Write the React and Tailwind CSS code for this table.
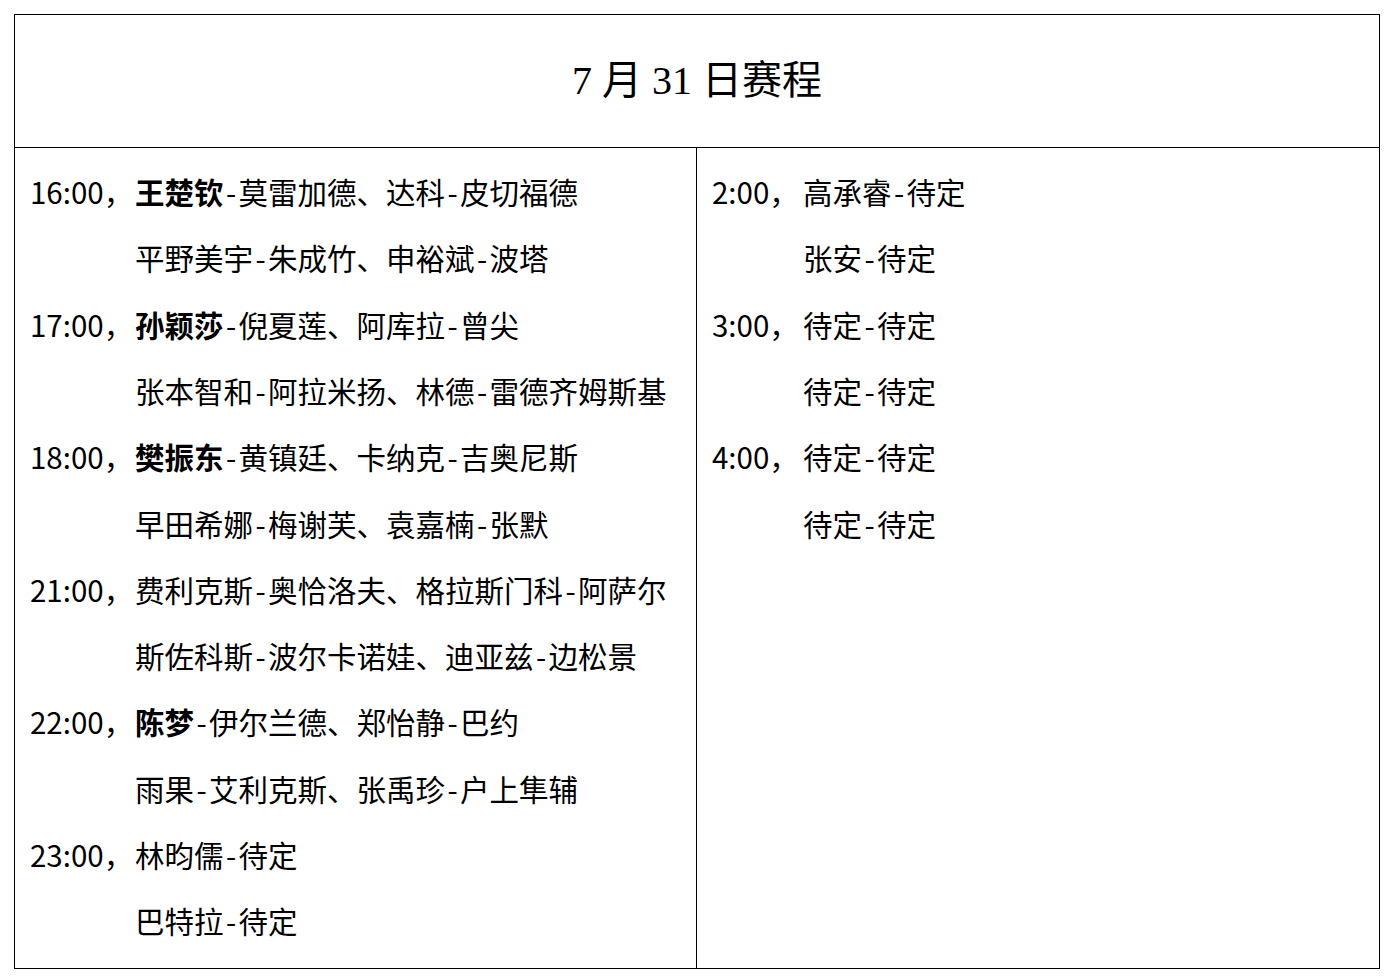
import React from 'react';

const left = [
  { time: '16:00，', bold: '王楚钦', rest: '-莫雷加德、达科-皮切福德' },
  { rest: '平野美宇-朱成竹、申裕斌-波塔' },
  { time: '17:00，', bold: '孙颖莎', rest: '-倪夏莲、阿库拉-曾尖' },
  { rest: '张本智和-阿拉米扬、林德-雷德齐姆斯基' },
  { time: '18:00，', bold: '樊振东', rest: '-黄镇廷、卡纳克-吉奥尼斯' },
  { rest: '早田希娜-梅谢芙、袁嘉楠-张默' },
  { time: '21:00，', rest: '费利克斯-奥恰洛夫、格拉斯门科-阿萨尔' },
  { rest: '斯佐科斯-波尔卡诺娃、迪亚兹-边松景' },
  { time: '22:00，', bold: '陈梦', rest: '-伊尔兰德、郑怡静-巴约' },
  { rest: '雨果-艾利克斯、张禹珍-户上隼辅' },
  { time: '23:00，', rest: '林昀儒-待定' },
  { rest: '巴特拉-待定' },
];

const right = [
  { time: '2:00，', rest: '高承睿-待定' },
  { rest: '张安-待定' },
  { time: '3:00，', rest: '待定-待定' },
  { rest: '待定-待定' },
  { time: '4:00，', rest: '待定-待定' },
  { rest: '待定-待定' },
];

// hyphens are half-width in the original font
const withDashes = (text) =>
  text.split('-').map((part, i) => (
    <React.Fragment key={i}>
      {i > 0 && <span className="inline-block w-[15px] text-center">-</span>}
      {part}
    </React.Fragment>
  ));

const Row = ({ row, labelWidth }) => (
  <div className="flex h-[66.3px] items-center whitespace-nowrap">
    <span className={labelWidth}>{row.time}</span>
    <span>
      {row.bold && <b className="font-bold">{row.bold}</b>}
      {withDashes(row.rest)}
    </span>
  </div>
);

const App = () => {
  return (
    <div className="min-h-screen bg-white pl-[14px] pt-[14px] text-black">
      <div className="flex h-[955px] w-[1366px] flex-col border border-black">
        <div className="flex h-[133px] items-center justify-center border-b border-black">
          <h1 className="text-[40px] font-['Liberation_Serif','Noto_Sans_CJK_SC',serif] font-normal">
            7 月 31 日赛程
          </h1>
        </div>
        <div className="grid flex-1 grid-cols-[682px_1fr] text-[29.5px] font-['Noto_Sans_CJK_SC',sans-serif]">
          <div className="border-r border-black pl-[15px] pt-[10px]">
            {left.map((row, i) => (
              <Row key={i} row={row} labelWidth="inline-block w-[105px] shrink-0" />
            ))}
          </div>
          <div className="pl-[15px] pt-[10px]">
            {right.map((row, i) => (
              <Row key={i} row={row} labelWidth="inline-block w-[91px] shrink-0" />
            ))}
          </div>
        </div>
      </div>
    </div>
  );
};

export default App;
